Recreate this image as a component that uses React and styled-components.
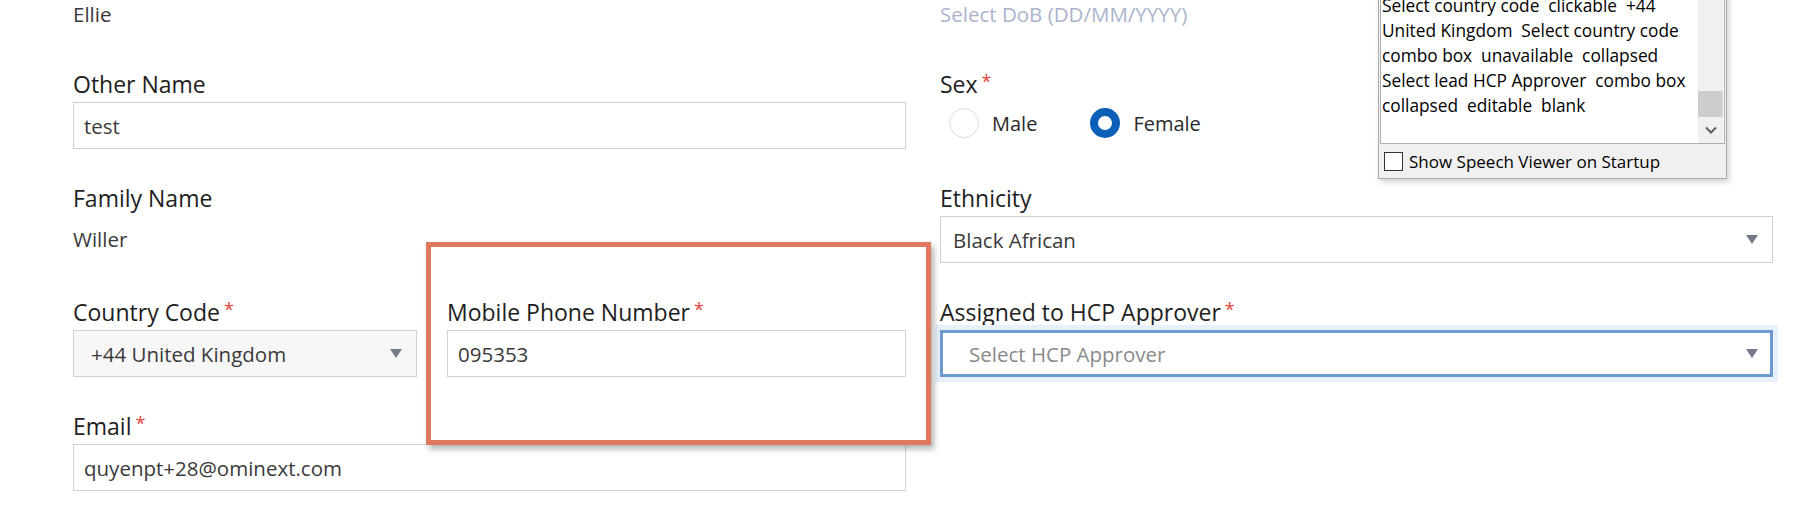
import React from 'react'
import styled, { createGlobalStyle } from 'styled-components'

const Global = createGlobalStyle`
  body {
    margin: 0;
    background: #fff;
    font-family: "Open Sans", "Noto Sans", sans-serif;
  }
`

const Page = styled.div`
  position: relative;
  height: 513px;
  overflow: hidden;
  background: #fff;
`

const Form = styled.div`
  display: grid;
  grid-template-columns: 833px 833px;
  column-gap: 34px;
  row-gap: 36px;
  padding-left: 73px;
`

const Field = styled.div`
  display: flex;
  flex-direction: column;
  min-width: 0;
`

const Label = styled.div`
  font-size: 23px;
  line-height: 26px;
  margin-bottom: 5px;
  color: #1e1e1e;
  white-space: nowrap;
`

const Req = styled.span`
  color: #e2463d;
  font-size: 18px;
  vertical-align: top;
  line-height: 20px;
  margin-left: 4px;
`

// static value text; $top is the row cut by the top edge of the page
const Value = styled.div`
  height: ${p => (p.$top ? 35 : 47)}px;
  line-height: ${p => (p.$top ? 28 : 47)}px;
  font-size: 20.5px;
  color: ${p => (p.$placeholder ? '#abb4cb' : '#3a3a3a')};
  white-space: nowrap;
`

const Input = styled.div`
  height: 47px;
  box-sizing: border-box;
  border: 1px solid #d0d0d0;
  background: ${p => (p.$muted ? '#f7f7f7' : '#fff')};
  padding: 0 14px 0 ${p => p.$indent || 10}px;
  display: flex;
  align-items: center;
  justify-content: space-between;
  font-size: 20.5px;
  color: #3a3a3a;
  white-space: nowrap;
`

const FocusedSelect = styled(Input)`
  border: 3px solid #6d9bd1;
  box-shadow: 0 0 0 5px #e6f1fc;
  color: #8a8a8a;
  padding-left: 26px;
  padding-right: 12px;
`

const Arrow = styled.span`
  width: 0;
  height: 0;
  border-left: 6px solid transparent;
  border-right: 6px solid transparent;
  border-top: 9px solid #737a8a;
`

const PhoneRow = styled.div`
  display: grid;
  grid-template-columns: 344px 459px;
  column-gap: 30px;
`

const RadioGroup = styled.div`
  height: 47px;
  display: flex;
  align-items: flex-start;
  padding-top: 6px;
  padding-left: 9px;
  box-sizing: border-box;
  gap: 53px;
`

const RadioOption = styled.label`
  display: flex;
  align-items: center;
  gap: 13px;
  font-size: 20px;
  color: #2a2a2a;
`

const RadioDot = styled.span`
  width: 30px;
  height: 30px;
  box-sizing: border-box;
  border-radius: 50%;
  background: #fff;
  border: ${p => (p.$checked ? '8px solid #0b5fb7' : '1px solid #dcdcdc')};
`

const Highlight = styled.div`
  position: absolute;
  left: 426px;
  top: 242px;
  width: 505px;
  height: 203px;
  box-sizing: border-box;
  border: 5px solid #e0785d;
  box-shadow: 3px 4px 6px rgba(0, 0, 0, 0.3);
  pointer-events: none;
`

const Viewer = styled.div`
  position: absolute;
  left: 1378px;
  top: -61px;
  width: 349px;
  height: 240px;
  box-sizing: border-box;
  border: 1px solid #ababab;
  background: #f0f0f0;
  box-shadow: 2px 3px 6px rgba(0, 0, 0, 0.18);
  display: flex;
  flex-direction: column;
`

const LogArea = styled.div`
  flex: 1;
  margin: 1px 1px 0 1px;
  border: 1px solid #adadad;
  background: #fff;
  display: flex;
`

const LogText = styled.div`
  flex: 1;
  display: flex;
  flex-direction: column;
  justify-content: flex-end;
  padding: 0 0 25px 1px;
  font-size: 17.3px;
  line-height: 25px;
  color: #000;
  white-space: pre;
`

const Scrollbar = styled.div`
  width: 25px;
  margin-right: 1px;
  background: #f0f0f0;
  display: flex;
  flex-direction: column;
  justify-content: flex-end;
`

const Thumb = styled.div`
  height: 26px;
  background: #cdcdcd;
`

const ScrollButton = styled.div`
  height: 26px;
  display: flex;
  align-items: center;
  justify-content: center;
`

const Footer = styled.div`
  height: 34px;
  display: flex;
  align-items: center;
  gap: 6px;
  padding-left: 5px;
  font-size: 17px;
  color: #000;
  white-space: nowrap;
`

const Checkbox = styled.span`
  width: 19px;
  height: 19px;
  box-sizing: border-box;
  border: 1px solid #333;
  background: #fff;
`

const logLines = [
  'Select country code  clickable  +44',
  'United Kingdom  Select country code',
  'combo box  unavailable  collapsed',
  'Select lead HCP Approver  combo box',
  'collapsed  editable  blank',
]

const Required = () => <Req>*</Req>

export default function App() {
  return (
    <Page>
      <Global />
      <Form>
        <Field>
          <Value $top>Ellie</Value>
        </Field>
        <Field>
          <Value $top $placeholder>Select DoB (DD/MM/YYYY)</Value>
        </Field>

        <Field>
          <Label>Other Name</Label>
          <Input>test</Input>
        </Field>
        <Field>
          <Label>Sex<Required /></Label>
          <RadioGroup>
            <RadioOption><RadioDot />Male</RadioOption>
            <RadioOption><RadioDot $checked />Female</RadioOption>
          </RadioGroup>
        </Field>

        <Field>
          <Label>Family Name</Label>
          <Value>Willer</Value>
        </Field>
        <Field>
          <Label>Ethnicity</Label>
          <Input $indent={12}>Black African<Arrow /></Input>
        </Field>

        <PhoneRow>
          <Field>
            <Label>Country Code<Required /></Label>
            <Input $muted $indent={17}>+44 United Kingdom<Arrow /></Input>
          </Field>
          <Field>
            <Label>Mobile Phone Number<Required /></Label>
            <Input>095353</Input>
          </Field>
        </PhoneRow>
        <Field>
          <Label>Assigned to HCP Approver<Required /></Label>
          <FocusedSelect>Select HCP Approver<Arrow /></FocusedSelect>
        </Field>

        <Field>
          <Label>Email<Required /></Label>
          <Input>quyenpt+28@ominext.com</Input>
        </Field>
      </Form>

      <Highlight />

      <Viewer>
        <LogArea>
          <LogText>
            {logLines.map(line => <div key={line}>{line}</div>)}
          </LogText>
          <Scrollbar>
            <Thumb />
            <ScrollButton>
              <svg width="12" height="8" viewBox="0 0 12 8">
                <path d="M1 1.5 L6 6.5 L11 1.5" fill="none" stroke="#606060" strokeWidth="2" />
              </svg>
            </ScrollButton>
          </Scrollbar>
        </LogArea>
        <Footer>
          <Checkbox />
          Show Speech Viewer on Startup
        </Footer>
      </Viewer>
    </Page>
  )
}
